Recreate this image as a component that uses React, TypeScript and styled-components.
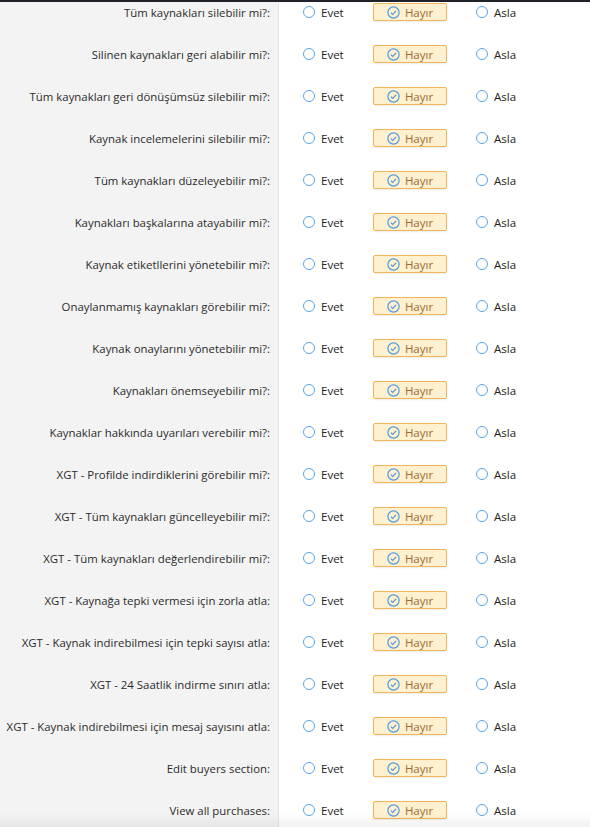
import React from "react";
import styled, { createGlobalStyle } from "styled-components";

const questions = [
  "Tüm kaynakları silebilir mi?:",
  "Silinen kaynakları geri alabilir mi?:",
  "Tüm kaynakları geri dönüşümsüz silebilir mi?:",
  "Kaynak incelemelerini silebilir mi?:",
  "Tüm kaynakları düzeleyebilir mi?:",
  "Kaynakları başkalarına atayabilir mi?:",
  "Kaynak etiketllerini yönetebilir mi?:",
  "Onaylanmamış kaynakları görebilir mi?:",
  "Kaynak onaylarını yönetebilir mi?:",
  "Kaynakları önemseyebilir mi?:",
  "Kaynaklar hakkında uyarıları verebilir mi?:",
  "XGT - Profilde indirdiklerini görebilir mi?:",
  "XGT - Tüm kaynakları güncelleyebilir mi?:",
  "XGT - Tüm kaynakları değerlendirebilir mi?:",
  "XGT - Kaynağa tepki vermesi için zorla atla:",
  "XGT - Kaynak indirebilmesi için tepki sayısı atla:",
  "XGT - 24 Saatlik indirme sınırı atla:",
  "XGT - Kaynak indirebilmesi için mesaj sayısını atla:",
  "Edit buyers section:",
  "View all purchases:",
];

function Permissions() {
  return (
    <Viewport>
      <GlobalStyle />
      <List>
        {questions.map((q) => (
          <Row key={q}>
            <Label>{q}</Label>
            <Choices>
              <Option width={70}>
                <Radio />
                <span>Evet</span>
              </Option>
              <Selected>
                <svg width="13" height="13" viewBox="0 0 13 13">
                  <circle cx="6.5" cy="6.5" r="5.6" fill="none" stroke="#4f9be0" strokeWidth="1.2" />
                  <path d="M3.9 6.7 L5.8 8.4 L9.1 4.9" fill="none" stroke="#4f9be0" strokeWidth="1.2" />
                </svg>
                <span>Hayır</span>
              </Selected>
              <Option>
                <Radio />
                <span>Asla</span>
              </Option>
            </Choices>
          </Row>
        ))}
      </List>
    </Viewport>
  );
}

const GlobalStyle = createGlobalStyle`
  html, body { margin: 0; padding: 0; background: #fff; overflow: hidden; }
  body { font-family: "Open Sans", "Noto Sans", sans-serif; }
`;

const Viewport = styled.div`
  height: 825px;
  overflow: hidden;
  border-top: 2px solid #1f2329;
  background: linear-gradient(to right, #f3f3f3 0, #f3f3f3 278px, #e2e2e2 278px, #e2e2e2 279px, #fff 279px);

  &::after {
    content: "";
    position: fixed;
    left: 0;
    right: 0;
    bottom: 0;
    height: 14px;
    background: linear-gradient(to bottom, rgba(0, 0, 0, 0), rgba(0, 0, 0, 0.05));
    pointer-events: none;
  }
`;

const List = styled.div`
  margin-top: -11px;
`;

const Row = styled.div`
  display: grid;
  grid-template-columns: 279px 1fr;
  height: 42px;
  align-items: center;
`;

const Label = styled.div`
  text-align: right;
  padding-right: 9px;
  font-size: 11.4px;
  color: #2b2b2b;
  white-space: nowrap;
`;

const Choices = styled.div`
  display: flex;
  align-items: center;
  padding-left: 24px;
  font-size: 11.5px;
  color: #222;
`;

const Option = styled.label<{ width?: number }>`
  display: flex;
  align-items: center;
  gap: 6px;
  width: ${(p) => (p.width ? `${p.width}px` : "auto")};
`;

const Radio = styled.span`
  width: 10px;
  height: 10px;
  border: 1.3px solid #5aa6ea;
  border-radius: 50%;
  background: #fff;
`;

const Selected = styled.div`
  display: flex;
  align-items: center;
  justify-content: center;
  gap: 5px;
  width: 72px;
  height: 16px;
  margin-right: 29px;
  background: #fff0cf;
  border: 1px solid #f0b558;
  border-radius: 2px;
  box-shadow: 0 1px 2px rgba(0, 0, 0, 0.08);
  color: #9c6a33;
`;

export default Permissions;
